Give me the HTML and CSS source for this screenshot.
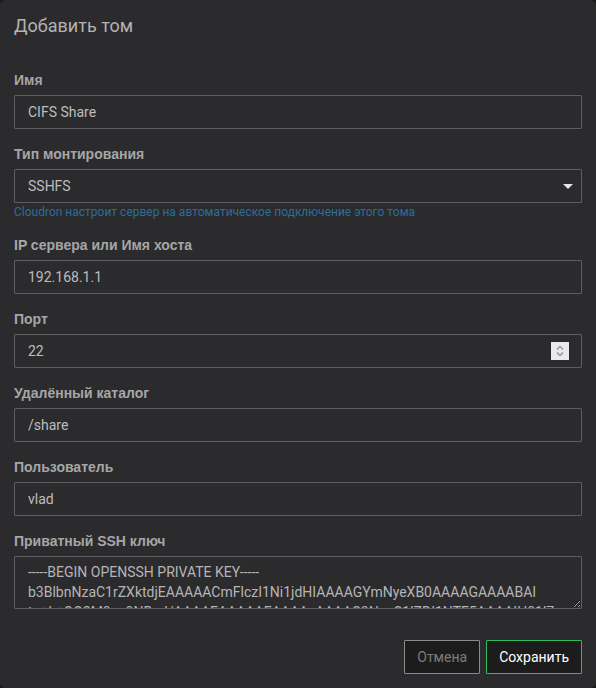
FILE: index.html
```html
<!DOCTYPE html>
<html lang="ru">
<head>
    <meta charset="UTF-8">
    <meta name="viewport" content="width=device-width, initial-scale=1.0">
    <title>Добавить том</title>
    <link rel="stylesheet" href="styles.css">
</head>
<body>

    <!-- Add volume dialog -->
    <div class="modal">
        <div class="modal-header">
            <h4>Добавить том</h4>
        </div>

        <form class="modal-body">
            <div class="form-group">
                <label for="name">Имя</label>
                <input type="text" id="name" value="CIFS Share">
            </div>

            <div class="form-group">
                <label for="mountType">Тип монтирования</label>
                <div class="select-wrap">
                    <select id="mountType">
                        <option>SSHFS</option>
                        <option>CIFS</option>
                        <option>NFS</option>
                    </select>
                </div>
                <p class="help">Cloudron настроит сервер на автоматическое подключение этого тома</p>
            </div>

            <div class="form-group">
                <label for="host">IP сервера или Имя хоста</label>
                <input type="text" id="host" value="192.168.1.1">
            </div>

            <div class="form-group">
                <label for="port">Порт</label>
                <div class="number-wrap">
                    <input type="text" id="port" value="22">
                    <span class="spinner">
                        <svg width="10" height="12" viewBox="0 0 10 12">
                            <path d="M2 4.5 L5 1.5 L8 4.5" fill="none" stroke="#8a8a8f" stroke-width="1.2"/>
                            <path d="M2 7.5 L5 10.5 L8 7.5" fill="none" stroke="#8a8a8f" stroke-width="1.2"/>
                        </svg>
                    </span>
                </div>
            </div>

            <div class="form-group">
                <label for="remoteDir">Удалённый каталог</label>
                <input type="text" id="remoteDir" value="/share">
            </div>

            <div class="form-group">
                <label for="user">Пользователь</label>
                <input type="text" id="user" value="vlad">
            </div>

            <div class="form-group">
                <label for="sshKey">Приватный SSH ключ</label>
                <textarea id="sshKey" spellcheck="false">-----BEGIN OPENSSH PRIVATE KEY-----
b3BlbnNzaC1rZXktdjEAAAAACmFlczI1Ni1jdHIAAAAGYmNyeXB0AAAAGAAAABAI
tq+k+OO2M0qx9NBpJ/AAAAEAAAAAEAAAAzAAAAC3NzaC1lZDI1NTE5AAAAIH01l7
-----END OPENSSH PRIVATE KEY-----</textarea>
            </div>
        </form>

        <div class="modal-footer">
            <button type="button" class="btn btn-cancel">Отмена</button>
            <button type="button" class="btn btn-save">Сохранить</button>
        </div>
    </div>

</body>
</html>
```

FILE: styles.css
```css
* {
    margin: 0;
    padding: 0;
    box-sizing: border-box;
}

body {
    font-family: Roboto, 'Liberation Sans', sans-serif;
    background: #1c1c1d;
    color: #b8b8b8;
    width: 596px;
    height: 688px;
    overflow: hidden;
}

.modal {
    width: 596px;
    height: 688px;
    background: #2b2b2d;
    border-radius: 6px;
    display: flex;
    flex-direction: column;
}

.modal-header {
    padding: 15px 14px 0;
}

.modal-header h4 {
    font-size: 18px;
    font-weight: 400;
    line-height: 22px;
    color: #b3b3b3;
}

.modal-body {
    padding: 34px 14px 0;
    flex: 1;
}

.form-group {
    margin-bottom: 16px;
}

.form-group label {
    display: block;
    font-family: 'Liberation Sans', Arial, sans-serif;
    font-size: 14px;
    font-weight: 700;
    line-height: 18px;
    color: #a6a6a6;
    margin-bottom: 6px;
}

.form-group input,
.form-group select,
.form-group textarea {
    display: block;
    width: 100%;
    height: 34px;
    padding: 0 13px;
    background: #2b2b2d;
    border: 1px solid #5e5e60;
    border-radius: 1px;
    font-family: Roboto, 'Liberation Sans', sans-serif;
    font-size: 14px;
    color: #bdbdbd;
    outline: none;
}

.select-wrap,
.number-wrap {
    position: relative;
}

.form-group select {
    appearance: none;
    -webkit-appearance: none;
}

.select-wrap::after {
    content: '';
    position: absolute;
    right: 9px;
    top: 15px;
    border-left: 5px solid transparent;
    border-right: 5px solid transparent;
    border-top: 5px solid #e6e6e6;
}

.number-wrap .spinner {
    position: absolute;
    right: 13px;
    top: 8px;
    width: 18px;
    height: 18px;
    background: #e9e9ed;
    display: flex;
    align-items: center;
    justify-content: center;
}

.help {
    margin-top: 2px;
    font-size: 12px;
    line-height: 15px;
    color: #2c6d9d;
}

.form-group textarea {
    height: 53px;
    padding: 5px 13px;
    line-height: 20px;
    resize: vertical;
    overflow: hidden;
    color: #b5b5b5;
}

.modal-footer {
    display: flex;
    justify-content: flex-end;
    gap: 6px;
    padding: 15px 14px 14px;
}

.btn {
    height: 34px;
    padding: 0 12px;
    background: #1c1c1d;
    font-family: Roboto, 'Liberation Sans', sans-serif;
    font-size: 14px;
    border-radius: 1px;
    cursor: pointer;
}

.btn-cancel {
    border: 1px solid #8a8a8a;
    color: #7c7c7c;
}

.btn-save {
    border: 1px solid #2ebd5c;
    color: #ffffff;
}
```
